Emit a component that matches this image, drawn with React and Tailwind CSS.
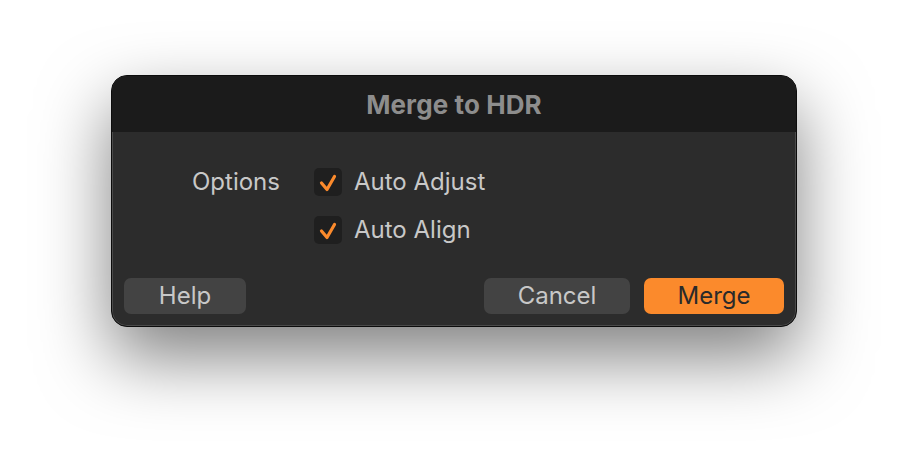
export default function App() {
  const font = { fontFamily: '"Inter", "Liberation Sans", sans-serif' };
  const Check = () => (
    <div className="w-[28px] h-[28px] rounded-[5px] bg-[#1f1f1f] flex items-center justify-center">
      <svg width="28" height="28" viewBox="0 0 28 28">
        <path d="M7.5 15 L13 21.5 L20.5 8.5" fill="none" stroke="#fb8a2c" strokeWidth="3.2" strokeLinecap="round" strokeLinejoin="round" />
      </svg>
    </div>
  );
  return (
    <div className="w-[908px] h-[474px] bg-white flex justify-center pt-[75px]" style={font}>
      <div className="w-[686px] h-[252px] rounded-[16px] border border-[#0c0c0c] bg-[#2c2c2c] overflow-hidden flex flex-col shadow-[0_30px_70px_rgba(0,0,0,0.5),inset_0_0_0_1px_#4a4a4a]">
        <div className="h-[56px] bg-[#1b1b1b] flex items-center justify-center text-[#8d8d8d] text-[26px] font-bold tracking-[0.1px]">
          Merge to HDR
        </div>
        <div className="flex-1 flex flex-col">
          <div className="flex pt-[36px] pl-[80px]">
            <div className="w-[122px] h-[28px] flex items-center text-[24px] text-[#c8c8c8]">Options</div>
            <div className="flex flex-col gap-[20px]">
              <div className="flex items-center gap-[12px] h-[28px]">
                <Check />
                <span className="text-[24px] text-[#c8c8c8]">Auto Adjust</span>
              </div>
              <div className="flex items-center gap-[12px] h-[28px]">
                <Check />
                <span className="text-[24px] text-[#c8c8c8]">Auto Align</span>
              </div>
            </div>
          </div>
          <div className="mt-auto flex items-center px-[12px] pb-[12px]">
            <button className="w-[122px] h-[36px] rounded-[7px] bg-[#434343] text-[24px] leading-none text-[#c8c8c8]">Help</button>
            <div className="flex-1" />
            <button className="w-[146px] h-[36px] rounded-[7px] bg-[#434343] text-[24px] leading-none text-[#c8c8c8]">Cancel</button>
            <button className="ml-[14px] w-[140px] h-[36px] rounded-[7px] bg-[#fb8a2c] text-[24px] leading-none text-[#2a2a2a]">Merge</button>
          </div>
        </div>
      </div>
    </div>
  );
}
